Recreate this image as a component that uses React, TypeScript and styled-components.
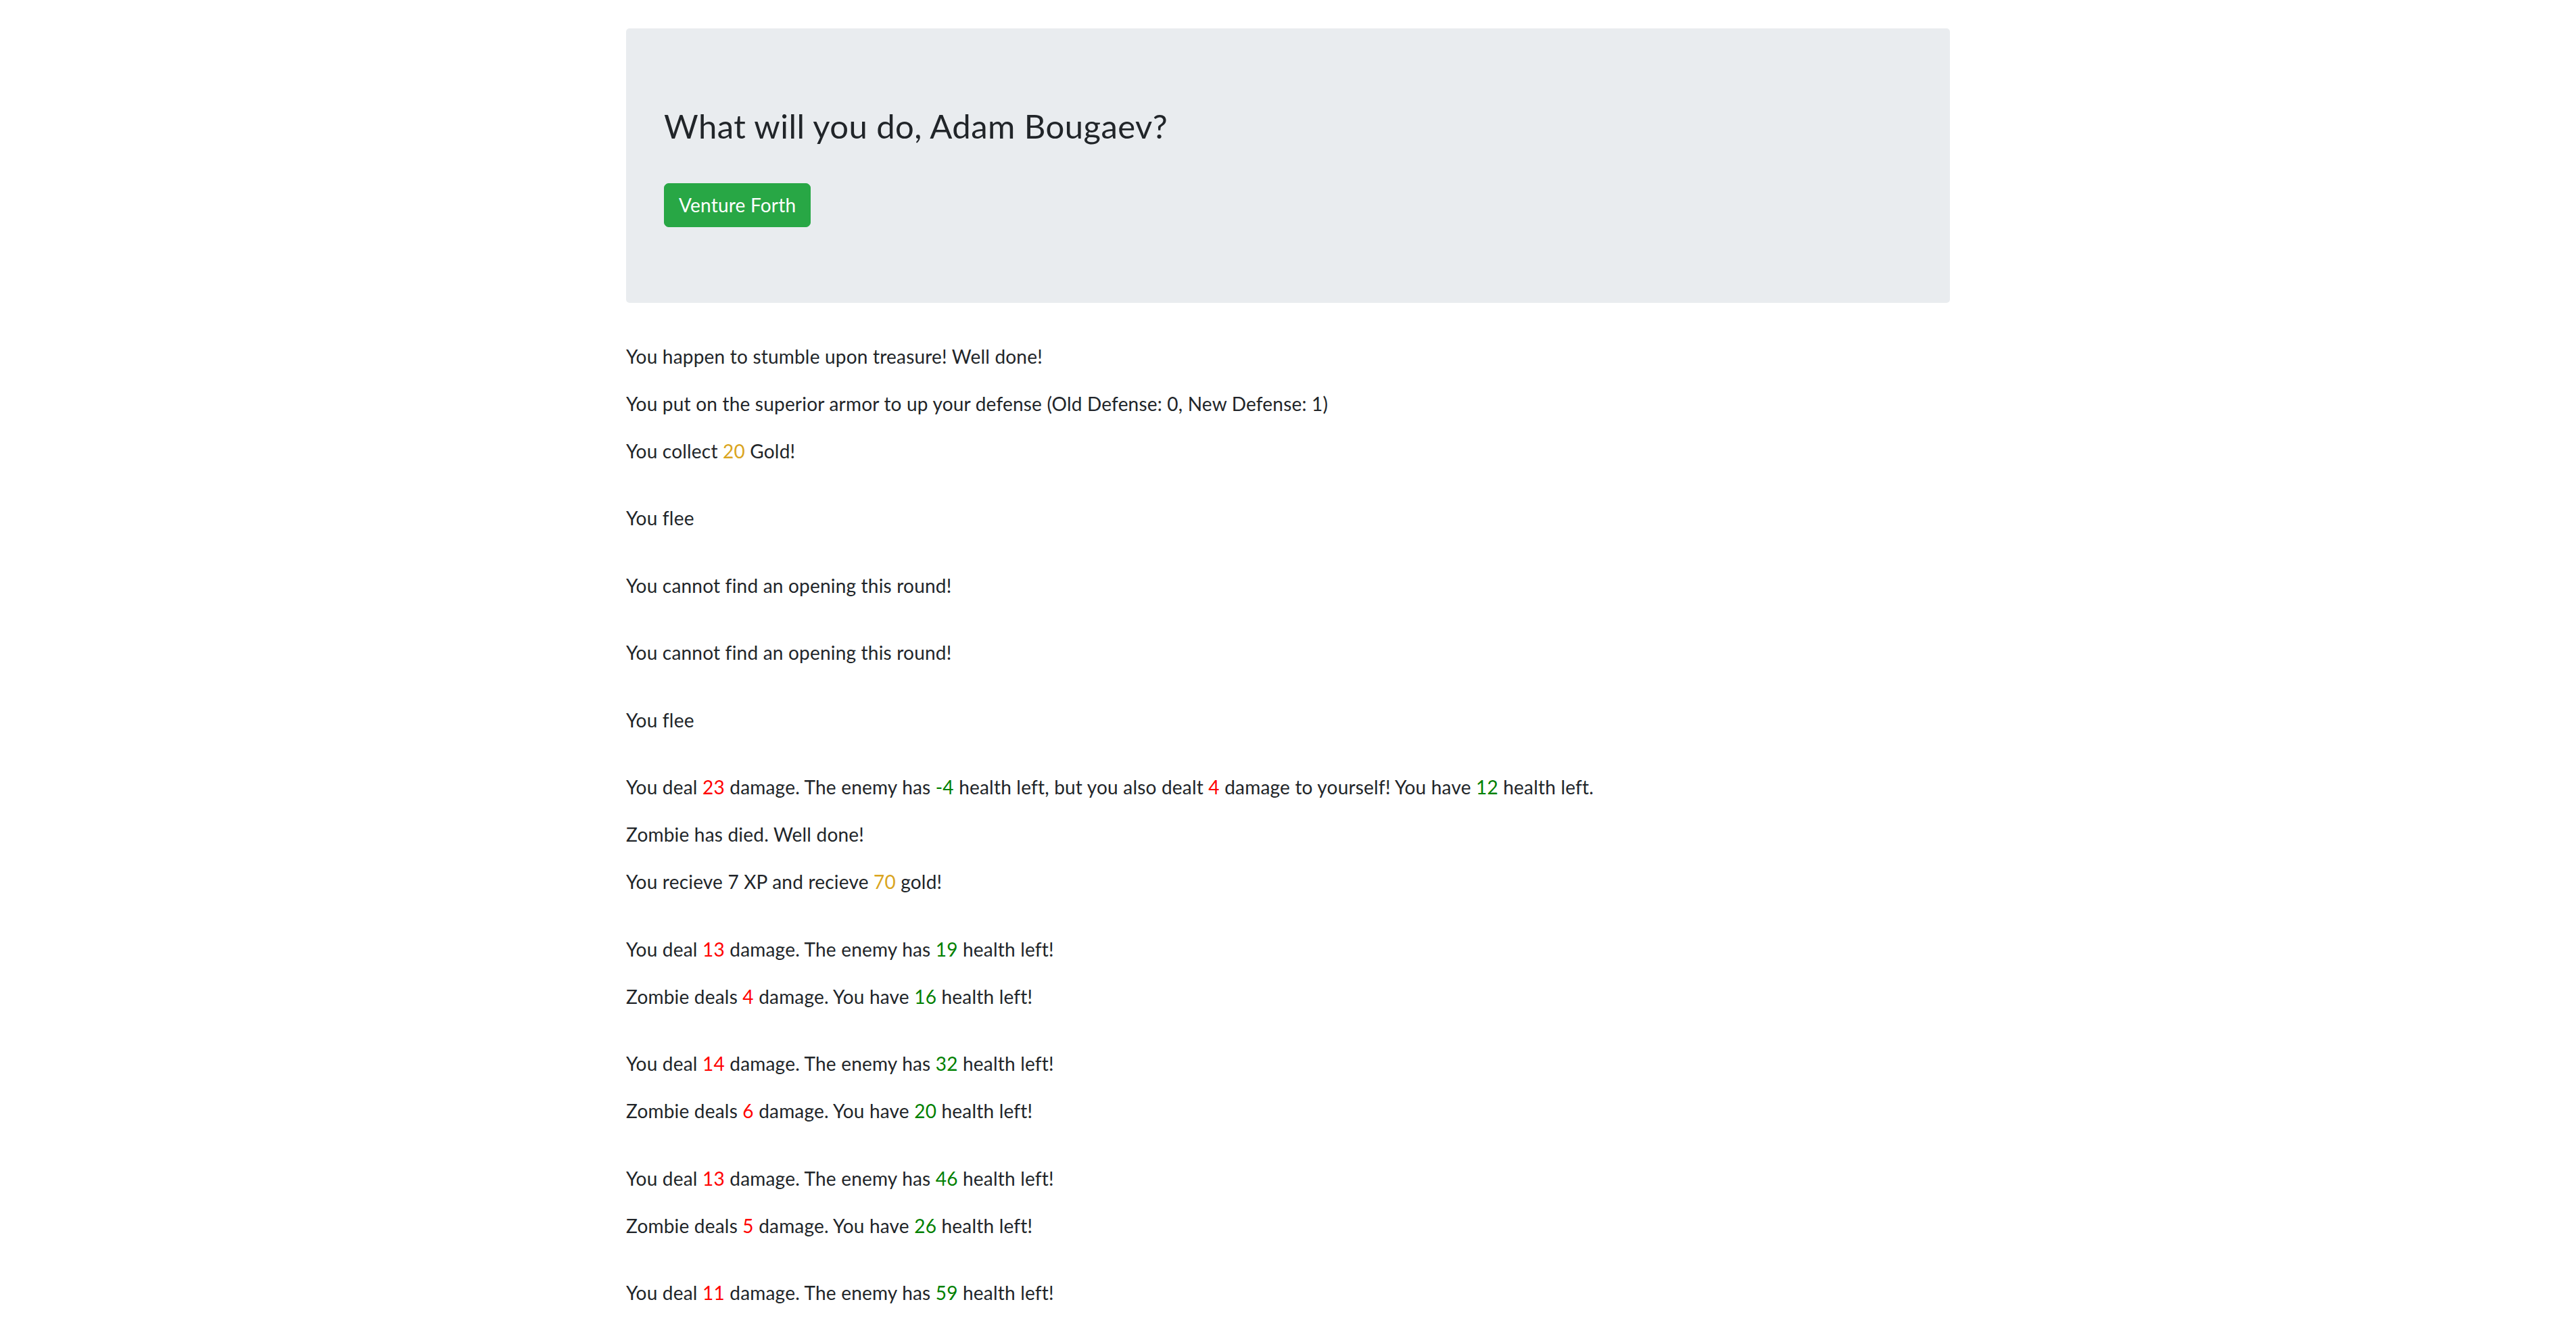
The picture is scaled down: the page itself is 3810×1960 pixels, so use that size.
import React from "react";
import styled, { createGlobalStyle } from "styled-components";

const GlobalStyle = createGlobalStyle`
  html, body {
    margin: 0;
    padding: 0;
    background: #ffffff;
  }
  body {
    font-family: "Segoe UI", Lato, "Open Sans", "Liberation Sans", sans-serif;
    font-size: 28px;
    line-height: 42px;
    color: #212529;
  }
  * { box-sizing: border-box; }
`;

const Container = styled.div`
  width: 1958px;
  margin: 42px auto 0;
`;

const Jumbotron = styled.section`
  background: #e9ecef;
  border-radius: 5px;
  padding: 112px 56px;
  margin-bottom: 58px;
  display: flex;
  flex-direction: column;
  align-items: flex-start;
`;

const Title = styled.h3`
  margin: 3px 0 55px;
  font-size: 49px;
  font-weight: 400;
  line-height: 1.2;
  letter-spacing: 0.45px;
  color: #212529;
`;

const Button = styled.button`
  font-family: inherit;
  font-size: 28px;
  line-height: 42px;
  letter-spacing: 0.2px;
  padding: 10.5px 21px;
  border: 1.75px solid #28a745;
  border-radius: 7px;
  background: #28a745;
  color: #ffffff;
  cursor: pointer;
`;

const Log = styled.div`
  display: flex;
  flex-direction: column;
  gap: 57.5px;
`;

const Group = styled.div`
  display: flex;
  flex-direction: column;
  gap: 28px;
`;

const Line = styled.p`
  margin: 0;
  font-size: 28px;
  line-height: 42px;
  letter-spacing: 0.2px;
  white-space: nowrap;
`;

type Tone = "red" | "green" | "gold";

const toneColor: Record<Tone, string> = {
  red: "#ff0000",
  green: "#008000",
  gold: "#daa520",
};

const Num = styled.span<{ $tone: Tone }>`
  color: ${(p) => toneColor[p.$tone]};
`;

type Seg = string | [Tone, string];

const groups: Seg[][][] = [
  [
    ["You happen to stumble upon treasure! Well done!"],
    ["You put on the superior armor to up your defense (Old Defense: 0, New Defense: 1)"],
    ["You collect ", ["gold", "20"], " Gold!"],
  ],
  [["You flee"]],
  [["You cannot find an opening this round!"]],
  [["You cannot find an opening this round!"]],
  [["You flee"]],
  [
    [
      "You deal ",
      ["red", "23"],
      " damage. The enemy has ",
      ["green", "-4"],
      " health left, but you also dealt ",
      ["red", "4"],
      " damage to yourself! You have ",
      ["green", "12"],
      " health left.",
    ],
    ["Zombie has died. Well done!"],
    ["You recieve 7 XP and recieve ", ["gold", "70"], " gold!"],
  ],
  [
    ["You deal ", ["red", "13"], " damage. The enemy has ", ["green", "19"], " health left!"],
    ["Zombie deals ", ["red", "4"], " damage. You have ", ["green", "16"], " health left!"],
  ],
  [
    ["You deal ", ["red", "14"], " damage. The enemy has ", ["green", "32"], " health left!"],
    ["Zombie deals ", ["red", "6"], " damage. You have ", ["green", "20"], " health left!"],
  ],
  [
    ["You deal ", ["red", "13"], " damage. The enemy has ", ["green", "46"], " health left!"],
    ["Zombie deals ", ["red", "5"], " damage. You have ", ["green", "26"], " health left!"],
  ],
  [["You deal ", ["red", "11"], " damage. The enemy has ", ["green", "59"], " health left!"]],
];

export default function App() {
  return (
    <>
      <GlobalStyle />
      <Container>
        <Jumbotron>
          <Title>What will you do, Adam Bougaev?</Title>
          <Button type="button">Venture Forth</Button>
        </Jumbotron>
        <Log>
          {groups.map((g, gi) => (
            <Group key={gi}>
              {g.map((line, li) => (
                <Line key={li}>
                  {line.map((seg, si) =>
                    typeof seg === "string" ? (
                      <React.Fragment key={si}>{seg}</React.Fragment>
                    ) : (
                      <Num key={si} $tone={seg[0]}>
                        {seg[1]}
                      </Num>
                    )
                  )}
                </Line>
              ))}
            </Group>
          ))}
        </Log>
      </Container>
    </>
  );
}
